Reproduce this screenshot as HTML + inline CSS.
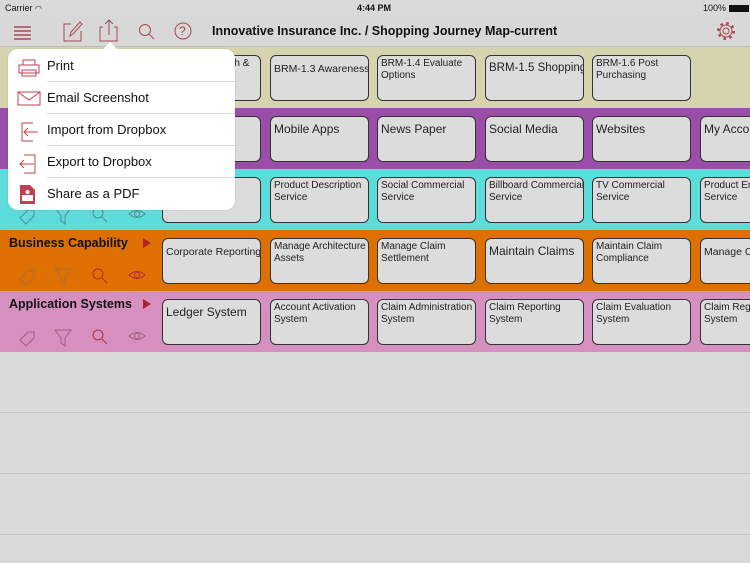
<!DOCTYPE html>
<html><head><meta charset="utf-8"><style>
*{margin:0;padding:0;box-sizing:border-box}
html,body{width:750px;height:563px;overflow:hidden}
body{background:#d9d9d9;font-family:"Liberation Sans",sans-serif;position:relative}
.abs{position:absolute}
.sb{font-size:9px;color:#111;top:3px}
.nav{left:0;top:15px;width:750px;height:32px;background:#d8d8d8;border-bottom:1px solid #bdbdbd}
.row{position:absolute;left:0;width:750px;height:61px}
.card{position:absolute;width:99px;height:46px;border:1px solid #333;border-radius:6px;background:#dcdcdc;color:#222;padding:2px 2px 0 3px;line-height:12px;font-size:10px;overflow:hidden;white-space:nowrap}
.card.b{font-size:12px;padding-top:6px}
.card.e{width:50px;border-right:none;border-radius:6px 0 0 6px}
.rt{position:absolute;left:9px;font-size:12.5px;font-weight:bold;color:#111}
.tri{position:absolute;left:143px;width:0;height:0;border-left:8px solid #b02030;border-top:5px solid transparent;border-bottom:5px solid transparent}
.line{position:absolute;left:0;width:750px;height:1px;background:#c4c4c4}
.pop{left:8px;top:49px;width:227px;height:161px;background:#fff;border-radius:10px;box-shadow:0 0 2px rgba(0,0,0,.1)}
.it{position:absolute;left:39px;font-size:13px;color:#111}
.sep{position:absolute;left:39px;right:0;height:1px;background:#ddd}
</style></head><body>
<div class="abs sb" style="left:5px">Carrier <span style="font-size:8px">&#x25E0;</span></div>
<div class="abs sb" style="left:357px;font-weight:bold">4:44 PM</div>
<div class="abs sb" style="left:703px">100% <span style="display:inline-block;width:20px;height:7px;background:#111;vertical-align:-1px"></span></div>
<div class="abs nav"></div>
<svg class="abs" style="left:0;top:15px" width="750" height="32" fill="none" stroke="#a84850" stroke-width="1">
<path d="M14 12h17M14 16h17M14 20h17M14 24h17" stroke-width="1.5"/>
<path d="M71 9h-7v17h17v-10M70 21l1-4 9-10 2 2-9 10z"/>
<path d="M103 12h-3v14h17v-14h-3M109 20V5M105 9l4-4 4 4"/>
<circle cx="145" cy="15" r="5.5"/><path d="M149 19l5 5"/>
<circle cx="183" cy="16" r="8"/>
<circle cx="726" cy="16" r="7.5" stroke-width="3" stroke-dasharray="2.4 3.5"/>
<circle cx="726" cy="16" r="6"/>
<circle cx="726" cy="16" r="3"/>
</svg>
<div class="abs" style="left:179px;top:24px;font-size:12px;color:#a84850">?</div>
<div class="abs" style="left:212px;top:24px;font-size:12.5px;font-weight:bold;color:#111">Innovative Insurance Inc. / Shopping Journey Map-current</div>

<div class="row" style="top:47px;background:#d5d4ae"></div>
<div class="row" style="top:108px;background:#9b4ea8"></div>
<div class="row" style="top:169px;background:#5ddcdc"></div>
<div class="row" style="top:230px;background:#dd7000"></div>
<div class="row" style="top:291px;background:#d690c0"></div>
<div class="line" style="top:412px"></div>
<div class="line" style="top:473px"></div>
<div class="line" style="top:534px"></div>

<div class="rt" style="top:236px">Business Capability</div><div class="tri" style="top:238px"></div>
<div class="rt" style="top:297px">Application Systems</div><div class="tri" style="top:299px"></div>
<svg class="abs" style="left:0;top:169px" width="160" height="183" fill="none" stroke-width="1">
<g>
<path d="M20 110l8-8 6 0 0 6-8 8z" stroke="#b06a40"/>
<path d="M55 100h16l-6 8v8l-4-3v-5z" stroke="#b06a40"/>
<circle cx="98" cy="105" r="5" stroke="#b03030"/><path d="M102 109l5 5" stroke="#b03030"/>
<path d="M129 106q8-7 16 0q-8 7-16 0z" stroke="#b03030"/><circle cx="137" cy="106" r="2.5" stroke="#b03030"/>
</g>
<g transform="translate(0,61)">
<path d="M20 110l8-8 6 0 0 6-8 8z" stroke="#a06080"/>
<path d="M55 100h16l-6 8v8l-4-3v-5z" stroke="#a06080"/>
<circle cx="98" cy="105" r="5" stroke="#b03040"/><path d="M102 109l5 5" stroke="#b03040"/>
<path d="M129 106q8-7 16 0q-8 7-16 0z" stroke="#a06080"/><circle cx="137" cy="106" r="2.5" stroke="#a06080"/>
</g>
<g transform="translate(0,-61)" stroke="#4a9090">
<path d="M20 110l8-8 6 0 0 6-8 8z"/><path d="M55 100h16l-6 8v8l-4-3v-5z"/>
<circle cx="98" cy="105" r="5"/><path d="M102 109l5 5"/>
<path d="M129 106q8-7 16 0q-8 7-16 0z"/><circle cx="137" cy="106" r="2.5"/>
</g>
</svg>

<div class="card" style="left:162px;top:55px">BRM-1.2 Search &amp;</div>
<div class="card b" style="left:270px;top:55px;font-size:10.5px;padding-top:7px">BRM-1.3 Awareness</div>
<div class="card" style="left:377px;top:55px">BRM-1.4 Evaluate<br>Options</div>
<div class="card b" style="left:485px;top:55px;font-size:11.5px">BRM-1.5 Shopping</div>
<div class="card" style="left:592px;top:55px">BRM-1.6 Post<br>Purchasing</div>

<div class="card b" style="left:162px;top:116px">Call Center</div>
<div class="card b" style="left:270px;top:116px">Mobile Apps</div>
<div class="card b" style="left:377px;top:116px">News Paper</div>
<div class="card b" style="left:485px;top:116px">Social Media</div>
<div class="card b" style="left:592px;top:116px">Websites</div>
<div class="card b e" style="left:700px;top:116px">My Account</div>

<div class="card" style="left:162px;top:177px"><br>Service</div>
<div class="card" style="left:270px;top:177px">Product Description<br>Service</div>
<div class="card" style="left:377px;top:177px">Social Commercial<br>Service</div>
<div class="card" style="left:485px;top:177px">Billboard Commercial<br>Service</div>
<div class="card" style="left:592px;top:177px">TV Commercial<br>Service</div>
<div class="card e" style="left:700px;top:177px">Product Enquiry<br>Service</div>

<div class="card b" style="left:162px;top:238px;font-size:10.5px;padding-top:7px">Corporate Reporting</div>
<div class="card" style="left:270px;top:238px">Manage Architecture<br>Assets</div>
<div class="card" style="left:377px;top:238px">Manage Claim<br>Settlement</div>
<div class="card b" style="left:485px;top:238px">Maintain Claims</div>
<div class="card" style="left:592px;top:238px">Maintain Claim<br>Compliance</div>
<div class="card b e" style="left:700px;top:238px;font-size:10.5px;padding-top:7px">Manage Claims</div>

<div class="card b" style="left:162px;top:299px">Ledger System</div>
<div class="card" style="left:270px;top:299px">Account Activation<br>System</div>
<div class="card" style="left:377px;top:299px">Claim Administration<br>System</div>
<div class="card" style="left:485px;top:299px">Claim Reporting<br>System</div>
<div class="card" style="left:592px;top:299px">Claim Evaluation<br>System</div>
<div class="card e" style="left:700px;top:299px">Claim Registration<br>System</div>

<div class="abs" style="left:102px;top:42px;width:0;height:0;border-left:8px solid transparent;border-right:8px solid transparent;border-bottom:8px solid #fff"></div>
<div class="abs pop">
<div class="it" style="top:9px">Print</div>
<div class="sep" style="top:32px"></div>
<div class="it" style="top:41px">Email Screenshot</div>
<div class="sep" style="top:64px"></div>
<div class="it" style="top:73px">Import from Dropbox</div>
<div class="sep" style="top:96px"></div>
<div class="it" style="top:105px">Export to Dropbox</div>
<div class="sep" style="top:128px"></div>
<div class="it" style="top:137px">Share as a PDF</div>
<svg class="abs" style="left:0;top:0" width="40" height="161" fill="none" stroke="#c04050" stroke-width="1">
<path d="M15 11h12v5M15 16v-5M11 16h20v8h-20zM14 21h14v6h-14z"/>
<path d="M10 43h22v13h-22zM10 43l11 8 11-8"/>
<path d="M25 74h-11v18h11M16 83h14M20 79l-4 4 4 4"/>
<path d="M16 106h11v18h-11M12 115h14M16 111l-4 4 4 4"/>
<path d="M12 136h10l5 5v14h-15z" fill="#c04050" stroke="none"/>
<rect x="14" y="146" width="11" height="6" fill="#fff" stroke="none"/><circle cx="19.5" cy="143" r="2" fill="#fff" stroke="none"/>
</svg>
</div>
</body></html>
